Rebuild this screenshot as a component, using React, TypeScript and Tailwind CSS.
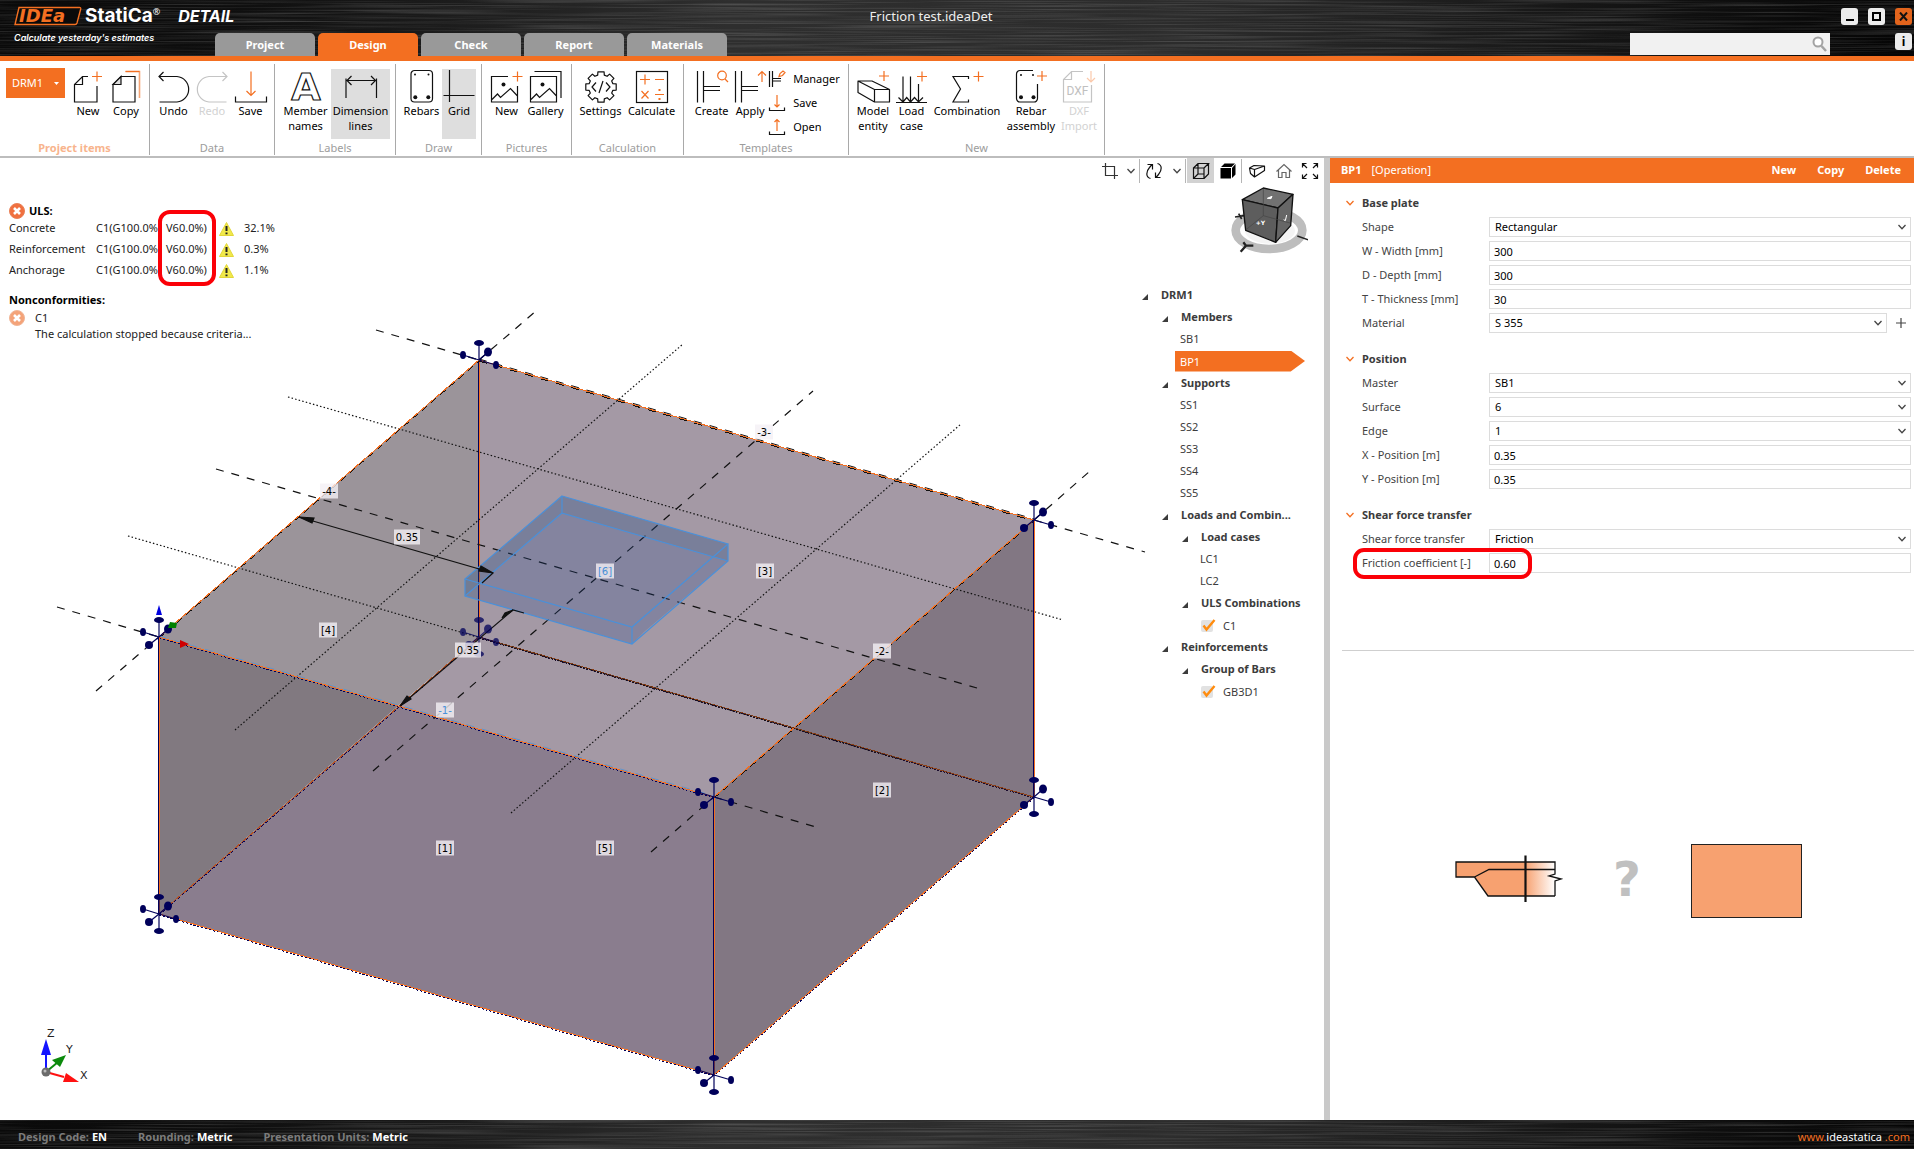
import React from "react";

const ORANGE = "#f36f21";
const NAVY = "#00005a";

/* ---------- shared pieces ---------- */

function Brushed({ id }: { id: string }) {
  return (
    <svg className="absolute inset-0 h-full w-full" aria-hidden="true">
      <defs>
        <linearGradient id={`${id}-g`} x1="0" x2="1" y1="0" y2="0">
          <stop offset="0" stopColor="#0a0a0a" />
          <stop offset="0.12" stopColor="#0e0e0e" />
          <stop offset="0.38" stopColor="#2e2e2e" />
          <stop offset="0.62" stopColor="#2c2c2c" />
          <stop offset="0.9" stopColor="#0e0e0e" />
          <stop offset="1" stopColor="#050505" />
        </linearGradient>
        <filter id={`${id}-n`} x="0" y="0" width="100%" height="100%">
          <feTurbulence type="fractalNoise" baseFrequency="0.006 0.7" numOctaves="2" seed="4" />
          <feColorMatrix values="0 0 0 0 0.4  0 0 0 0 0.4  0 0 0 0 0.4  1 0 0 0 -0.42" />
        </filter>
      </defs>
      <rect width="100%" height="100%" fill={`url(#${id}-g)`} />
      <rect width="100%" height="100%" filter={`url(#${id}-n)`} opacity="0.6" />
    </svg>
  );
}

function Icon({ children, size = 32, color = "#111" }: { children: React.ReactNode; size?: number; color?: string }) {
  return (
    <svg
      width={size}
      height={size}
      viewBox={`0 0 ${size} ${size}`}
      fill="none"
      stroke={color}
      strokeWidth="1.2"
      className="shrink-0 overflow-visible"
      aria-hidden="true"
    >
      {children}
    </svg>
  );
}

const Plus = ({ x, y, r = 5 }: { x: number; y: number; r?: number }) => (
  <path d={`M${x - r} ${y}h${2 * r}M${x} ${y - r}v${2 * r}`} stroke={ORANGE} />
);

const Chevron = ({ color = "#444" }: { color?: string }) => (
  <svg width="8" height="6" viewBox="0 0 8 6" fill="none" stroke={color} strokeWidth="1.3" aria-hidden="true">
    <path d="M0.5 1L4 4.7L7.5 1" />
  </svg>
);

/* ---------- ribbon icons ---------- */

function gearPath(cx: number, cy: number) {
  const pts: string[] = [];
  const teeth = 8;
  for (let i = 0; i < teeth; i++) {
    const c = (i / teeth) * Math.PI * 2 - Math.PI / 2;
    const steps: [number, number][] = [
      [-0.27, 12.3],
      [-0.2, 15.5],
      [0.2, 15.5],
      [0.27, 12.3],
    ];
    steps.forEach(([a, r]) =>
      pts.push(`${(cx + Math.cos(c + a) * r).toFixed(1)} ${(cy + Math.sin(c + a) * r).toFixed(1)}`)
    );
  }
  return `M${pts.join("L")}Z`;
}

const icons = {
  newDoc: (
    <Icon>
      <path d="M16 5.5H10.5L2.5 13.5V31H25V15M10.5 5.5V13.5H2.5" />
      <Plus x={25} y={5.5} />
    </Icon>
  ),
  copy: (
    <Icon>
      <path d="M11 5.5H25V31H3V13.5Z" />
      <path d="M11 5.5V13.5H3Z" fill="#ddd" />
      <path d="M15.5 0.5H29.5V27" stroke="#f5a576" strokeWidth="1.6" />
      <path d="M15.5 0.5H29.5" stroke={ORANGE} />
    </Icon>
  ),
  undo: (
    <Icon>
      <path d="M1 5.5H19A12.8 12.8 0 0 1 19 31H1.5M5.5 1L1 5.5L5.5 10" />
    </Icon>
  ),
  redo: (
    <Icon color="#c4c4c4">
      <path d="M31 5.5H13A12.8 12.8 0 0 0 13 31H30.5M26.5 1L31 5.5L26.5 10" />
    </Icon>
  ),
  save: (
    <Icon>
      <path d="M0.5 25.5V31H31.5V25.5" />
      <path d="M16 0.5V24.5M11.5 20L16 24.5L20.5 20" stroke={ORANGE} />
    </Icon>
  ),
  memberNames: (
    <Icon>
      <text x="16" y="29" textAnchor="middle" className="font-['DejaVu_Sans'] text-[38px] font-bold" strokeWidth="1.2">
        A
      </text>
    </Icon>
  ),
  dimension: (
    <Icon>
      <path d="M1 7.5V27M31.5 7.5V27M1.5 9.5H31M6.5 5L2 9.5L6.5 14M26 5L30.5 9.5L26 14" />
    </Icon>
  ),
  rebars: (
    <Icon>
      <rect x="5" y="-0.5" width="21.5" height="31.5" rx="3.5" />
      <g fill="#111" stroke="none">
        <circle cx="9" cy="3.5" r="1" />
        <circle cx="22.5" cy="3.5" r="1" />
        <circle cx="9.3" cy="26.3" r="2" />
        <circle cx="22.3" cy="26.3" r="2" />
      </g>
    </Icon>
  ),
  grid: (
    <Icon>
      <path d="M6.5 -1V31M0.5 24.5H31.5" />
    </Icon>
  ),
  picture: (
    <Icon>
      <path d="M17 5.5H0.5V31H26.5V15M1 28.5L6.5 23L9.5 26.5L19.5 17.5L26.5 25" />
      <circle cx="12.5" cy="13.5" r="2" fill="#111" stroke="none" />
      <Plus x={26.5} y={5.5} />
    </Icon>
  ),
  gallery: (
    <Icon>
      <path d="M0.5 5.5H26.5V31H0.5ZM1 28.5L6.5 23L9.5 26.5L19.5 17.5L26.5 25M4.5 0.5H31V27" />
      <circle cx="12.5" cy="13.5" r="2" fill="#111" stroke="none" />
    </Icon>
  ),
  settings: (
    <Icon>
      <path d={gearPath(16, 16)} strokeLinejoin="round" />
      <path d="M11 11.5L7 16L11 20.5M21 11.5L25 16L21 20.5M18 10L14 22" />
    </Icon>
  ),
  calculate: (
    <Icon>
      <rect x="0.5" y="0.5" width="31" height="31" />
      <g stroke={ORANGE}>
        <path d="M4 8.5H14M9 3.5V13.5M19 8.5H28M5.5 20L12.5 27.5M12.5 20L5.5 27.5M19 23.5H28" />
        <path d="M23.5 18V20M23.5 27V29" strokeWidth="2" />
      </g>
    </Icon>
  ),
  create: (
    <Icon>
      <path d="M1.5 0V31.5M7.5 0V31.5M7.5 15.5H24M7.5 19.5H24" />
      <circle cx="26" cy="4.5" r="4.3" stroke={ORANGE} />
      <path d="M29 8L32 11" stroke={ORANGE} />
    </Icon>
  ),
  apply: (
    <Icon>
      <path d="M1.5 0V31.5M7.5 0V31.5M7.5 15.5H24M7.5 19.5H24" />
      <path d="M28 0.5V11M24 4.5L28 0.5L32 4.5" stroke={ORANGE} />
    </Icon>
  ),
  modelEntity: (
    <Icon>
      <path d="M17.5 18.5H32.5V31H17.5ZM17.5 18.5L1 10H15L32.5 18.5M1 10V21.5L17.5 31" strokeLinejoin="round" />
      <Plus x={27} y={5} />
    </Icon>
  ),
  loadCase: (
    <Icon>
      <path d="M0 31.5H31M7 5.5V31M14.5 5.5V31M22.5 13V31M2.5 26.5L7 31L10.7 26.5L14.5 31L18.5 26.5L22.5 31L27 26.5" />
      <Plus x={26} y={5.5} />
    </Icon>
  ),
  combination: (
    <Icon>
      <path d="M17.5 8V5.5H2L9.5 18L2 31H17.5V28.5" />
      <Plus x={27.5} y={5.5} />
    </Icon>
  ),
  rebarAssembly: (
    <Icon>
      <path d="M18 -0.5H5A3.5 3.5 0 0 0 1.5 3V27.5A3.5 3.5 0 0 0 5 31H19A3.5 3.5 0 0 0 22.5 27.5V13" />
      <g fill="#111" stroke="none">
        <circle cx="6" cy="4" r="1" />
        <circle cx="18" cy="4" r="1" />
        <circle cx="6" cy="26.3" r="2" />
        <circle cx="18.5" cy="26.3" r="2" />
      </g>
      <Plus x={27} y={5} />
    </Icon>
  ),
  dxf: (
    <Icon color="#c4c4c4">
      <path d="M20 0.5H8.5L0.5 8.5V31H28.5V14M8.5 0.5V8.5H0.5" />
      <path d="M28 0V11M24 7L28 11L32 7" stroke="#fbc9ab" />
      <text x="14.5" y="24" textAnchor="middle" fill="#c0c0c0" stroke="none" className="font-['Roboto'] text-[12px]">
        DXF
      </text>
    </Icon>
  ),
  manager: (
    <Icon size={16}>
      <path d="M0.5 0V16M3.5 0V16M3.5 7.5H12M3.5 10H12" />
      <path d="M10 5.5L11 2.5L14 0L16 1.5L13.5 4.5Z" stroke={ORANGE} />
    </Icon>
  ),
  saveSmall: (
    <Icon size={16}>
      <path d="M0.5 12.5V15.5H15.5V12.5" />
      <path d="M8 0V12M5.5 9.5L8 12L10.5 9.5" stroke={ORANGE} />
    </Icon>
  ),
  openSmall: (
    <Icon size={16}>
      <path d="M0.5 12.5V15.5H15.5V12.5" />
      <path d="M8 12V0.5M5.5 3L8 0.5L10.5 3" stroke={ORANGE} />
    </Icon>
  ),
};

/* ---------- ribbon ---------- */

function Tool({
  icon,
  label,
  width,
  active,
  disabled,
}: {
  icon: React.ReactNode;
  label: string;
  width: string;
  active?: boolean;
  disabled?: boolean;
}) {
  return (
    <button
      disabled={disabled}
      className={`flex h-[70px] shrink-0 flex-col items-center pt-[2px] text-[11px] leading-[15px] ${width} ${
        active ? "bg-[#dedede]" : ""
      } ${disabled ? "text-[#d2d2d2]" : "text-black"}`}
    >
      {icon}
      <span className="whitespace-pre text-center">{label}</span>
    </button>
  );
}

function Group({
  title,
  width,
  accent,
  children,
}: {
  title: string;
  width: string;
  accent?: boolean;
  children: React.ReactNode;
}) {
  return (
    <section className={`flex shrink-0 flex-col justify-between border-r border-[#a9a9a9] pt-[5px] ${width}`}>
      <div className="flex justify-center">{children}</div>
      <h2
        className={`text-center text-[11px] leading-[15px] ${
          accent ? "font-bold text-[#f8b48d]" : "text-[#9c9c9c]"
        }`}
      >
        {title}
      </h2>
    </section>
  );
}

function Ribbon() {
  return (
    <div className="flex h-[97px] shrink-0 border-b-2 border-[#bdbdbd] pb-px pt-[3px]">
      <Group title="Project items" width="w-[150px]" accent>
        <div className="flex gap-1 pl-[2px]">
          <button className="-mt-[1px] flex h-[30px] w-[59px] items-center justify-between bg-[#f36f21] px-[6px] text-[11px] text-white">
            DRM1
            <svg width="5" height="3" viewBox="0 0 5 3" fill="white" aria-hidden="true">
              <path d="M0 0H5L2.5 3Z" />
            </svg>
          </button>
          <div className="flex">
            <Tool icon={icons.newDoc} label="New" width="w-[38px]" />
            <Tool icon={icons.copy} label="Copy" width="w-[38px]" />
          </div>
        </div>
      </Group>
      <Group title="Data" width="w-[125px]">
        <Tool icon={icons.undo} label="Undo" width="w-[38px]" />
        <Tool icon={icons.redo} label="Redo" width="w-[39px]" disabled />
        <Tool icon={icons.save} label="Save" width="w-[38px]" />
      </Group>
      <Group title="Labels" width="w-[121px]">
        <Tool icon={icons.memberNames} label={"Member\nnames"} width="w-[51px]" />
        <Tool icon={icons.dimension} label={"Dimension\nlines"} width="w-[59px]" active />
      </Group>
      <Group title="Draw" width="w-[86px]">
        <Tool icon={icons.rebars} label="Rebars" width="w-[41px]" />
        <Tool icon={icons.grid} label="Grid" width="w-[34px]" active />
      </Group>
      <Group title="Pictures" width="w-[90px]">
        <Tool icon={icons.picture} label="New" width="w-[38px]" />
        <Tool icon={icons.gallery} label="Gallery" width="w-[40px]" />
      </Group>
      <Group title="Calculation" width="w-[112px]">
        <Tool icon={icons.settings} label="Settings" width="w-[48px]" />
        <Tool icon={icons.calculate} label="Calculate" width="w-[54px]" />
      </Group>
      <Group title="Templates" width="w-[165px]">
        <Tool icon={icons.create} label="Create" width="w-[39px]" />
        <Tool icon={icons.apply} label="Apply" width="w-[38px]" />
        <div className="flex flex-col gap-2 pt-[2px] text-[11px] leading-4">
          <button className="flex items-center gap-2">{icons.manager}Manager</button>
          <button className="flex items-center gap-2">{icons.saveSmall}Save</button>
          <button className="flex items-center gap-2">{icons.openSmall}Open</button>
        </div>
      </Group>
      <Group title="New" width="w-[256px]">
        <Tool icon={icons.modelEntity} label={"Model\nentity"} width="w-[38px]" />
        <Tool icon={icons.loadCase} label={"Load\ncase"} width="w-[39px]" />
        <Tool icon={icons.combination} label="Combination" width="w-[72px]" />
        <Tool icon={icons.rebarAssembly} label={"Rebar\nassembly"} width="w-[56px]" />
        <Tool icon={icons.dxf} label={"DXF\nImport"} width="w-[40px]" disabled />
      </Group>
    </div>
  );
}

/* ---------- header ---------- */

function Logo() {
  return (
    <div className="flex w-[250px] flex-col pl-[14px] pt-[6px] text-white">
      <div className="flex items-center whitespace-nowrap">
        <svg width="68" height="20" viewBox="0 0 68 20" role="img" aria-label="IDEA">
          <path d="M5 1.5H65.5Q67 1.5 66.7 3L63 17Q62.5 18.5 61 18.5H1Z" fill="#0a0a0a" stroke={ORANGE} strokeWidth="1.4" />
          <text x="5" y="16" fill={ORANGE} className="font-['DejaVu_Sans'] text-[18px] font-bold italic">
            IDEa
          </text>
        </svg>
        <span className="pl-[3px] font-['Inter'] text-[19px] font-bold leading-5">StatiCa</span>
        <sup className="text-[9px]">®</sup>
        <span className="pl-[18px] font-['Inter'] text-[16px] font-bold italic leading-5">DETAIL</span>
      </div>
      <span className="pt-[4px] font-['Inter'] text-[9px] font-semibold italic leading-4">Calculate yesterday's estimates</span>
    </div>
  );
}

const tabs = ["Project", "Design", "Check", "Report", "Materials"];

function Header() {
  return (
    <header className="relative h-[61px] shrink-0 border-b-[5px] border-[#f36f21] bg-black">
      <Brushed id="head" />
      <div className="relative flex h-full">
        <Logo />
        <nav className="flex min-w-0 flex-1 flex-col justify-between">
          <h1 className="pt-[8px] text-center text-[13px] leading-4 text-[#eee]">Friction test.ideaDet</h1>
          <div className="-ml-[35px] flex gap-[3px]">
            {tabs.map((t) => (
              <button
                key={t}
                className={`h-[23px] w-[100px] rounded-t-[5px] pt-px text-[11px] font-bold text-white ${
                  t === "Design" ? "bg-[#f36f21]" : "bg-[#999]"
                }`}
              >
                {t}
              </button>
            ))}
          </div>
        </nav>
        <div className="flex w-[302px] flex-col items-end pr-[2px] pt-[8px]">
          <div className="flex gap-[10px]">
            <button aria-label="Minimize" className="flex h-[17px] w-[17px] items-end justify-center rounded-[3px] bg-[#ececec] pb-[4px]">
              <span className="h-[2px] w-[8px] bg-black" />
            </button>
            <button aria-label="Maximize" className="flex h-[17px] w-[17px] items-center justify-center rounded-[3px] bg-[#ececec]">
              <span className="h-[9px] w-[9px] border-2 border-black" />
            </button>
            <button aria-label="Close" className="flex h-[17px] w-[17px] items-center justify-center rounded-[3px] bg-[#e2641c]">
              <svg width="9" height="9" viewBox="0 0 9 9" stroke="#111" strokeWidth="2" aria-hidden="true">
                <path d="M1 0.5L8 8.5M8 0.5L1 8.5" />
              </svg>
            </button>
          </div>
          <div className="flex gap-[65px] pt-[8px]">
            <label className="flex h-[22px] w-[200px] items-center bg-[#f1f1f1] pr-[3px]">
              <input aria-label="Search" className="min-w-0 flex-1 bg-transparent px-1 text-[11px] outline-none" />
              <svg width="15" height="16" viewBox="0 0 15 16" fill="none" stroke="#a3a3a3" aria-hidden="true">
                <circle cx="6" cy="6" r="4.5" strokeWidth="2" fill="#fff" />
                <path d="M9.5 10L14 15" strokeWidth="2.5" />
              </svg>
            </label>
            <button aria-label="Information" className="h-[17px] w-[17px] rounded-[3px] bg-[#ececec] text-[12px] font-bold leading-[17px] text-black">
              i
            </button>
          </div>
        </div>
      </div>
    </header>
  );
}

/* ---------- 3D scene ---------- */

const dirs: [number, number, number, number][] = [
  [0, -17, 5, 3],
  [0, 17, 5, 3],
  [-16, -5, 3, 4],
  [17, 5, 3, 4],
  [9, -8, 4, 4.5],
  [-10, 8, 4, 4],
];

function Support({ x, y, opacity = 1, skip = [] }: { x: number; y: number; opacity?: number; skip?: number[] }) {
  return (
    <g opacity={opacity}>
      {dirs.map(([dx, dy, rx, ry], i) =>
        skip.includes(i) ? null : (
          <g key={i}>
            <path d={`M${x} ${y}l${dx} ${dy}`} stroke={NAVY} strokeWidth="1.2" />
            <ellipse cx={x + dx} cy={y + dy} rx={rx} ry={ry} fill={NAVY} />
          </g>
        )
      )}
    </g>
  );
}

function Tag({ x, y, text, color = "#000" }: { x: number; y: number; text: string; color?: string }) {
  const w = text.length > 3 ? 26 : 18;
  return (
    <g>
      <rect x={x - w / 2} y={y - 7.5} width={w} height="15" fill="#f4f0f5" fillOpacity="0.8" />
      <text x={x} y={y + 4} textAnchor="middle" fill={color} className="font-['DejaVu_Sans'] text-[10px]">
        {text}
      </text>
    </g>
  );
}

function Edge({
  d,
  base = ORANGE,
  over = NAVY,
  dash = "2 2",
}: {
  d: string;
  base?: string;
  over?: string;
  dash?: string;
}) {
  return (
    <g shapeRendering="crispEdges">
      <path d={d} stroke={over} strokeWidth="1" strokeDasharray={dash} transform="translate(0 1)" />
      <path d={d} stroke={base} strokeWidth="1" />
    </g>
  );
}

function Post({ x, y1, y2 }: { x: number; y1: number; y2: number }) {
  return (
    <>
      <path d={`M${x - 0.5} ${y1}V${y2}`} stroke={NAVY} strokeWidth="1" />
      <path d={`M${x + 0.5} ${y1}V${y2}`} stroke={ORANGE} strokeWidth="1" />
    </>
  );
}

function Scene() {
  return (
    <svg
      className="absolute inset-0 h-full w-full"
      viewBox="0 158 1324 962"
      preserveAspectRatio="xMinYMin meet"
      fill="none"
      role="img"
      aria-label="3D model of concrete block with base plate"
    >
      <path d="M159 637L479 360V637L398 706Z" fill="#9b949a" />
      <path d="M479 360L1034 520L714 797L398 706L479 637Z" fill="#a499a5" />
      <path d="M159 637L398 706L159 914Z" fill="#817980" />
      <path d="M398 706L714 797V1075L159 914Z" fill="#8a7d8e" />
      <path d="M714 797L1034 520V797L714 1075Z" fill="#827783" />

      {/* rear edges seen through the block */}
      <Post x={479} y1={360} y2={637} />
      <Edge d="M479 637L1034 797" base="#8a3f17" over="#1a0b2e" dash="2 1" />
      <Edge d="M479 637L159 914" base="#b35326" over={NAVY} dash="3 2" />

      {/* dotted grid */}
      <g stroke="#111" strokeWidth="1.2" strokeDasharray="1.5 2.2">
        <path d="M288 397L1063 620" />
        <path d="M128 536L903 760" />
        <path d="M235 730L683 344" />
        <path d="M511 813L961 424" />
      </g>

      {/* dashed axes */}
      <g stroke="#111" strokeWidth="1.2" strokeDasharray="8 8">
        <path d="M376 330L479 360M1034 520L1145 552" />
        <path d="M96 691L159 637M479 360L536 311" />
        <path d="M57 607L159 637M714 797L816 827" />
        <path d="M651 852L714 797M1034 520L1090 471" />
        <path d="M216 469L977 688" />
        <path d="M373 771L813 391" />
      </g>

      <path d="M479 359L1034 519" stroke="#111" strokeDasharray="8 8" />
      <Edge d="M479 360L1034 520" over="#111" dash="8 8" />
      <Edge d="M159 637L479 360" over="#111" dash="7 5" />
      <Edge d="M714 797L1034 520" over="#111" dash="7 5" />
      <Edge d="M159 637L714 797" over={NAVY} dash="2 2" />
      <path d="M159 636L714 796" stroke="#5c94cf" strokeDasharray="8 8" />
      <Edge d="M159 914L714 1075L1034 797" />
      <Post x={159} y1={637} y2={914} />
      <Post x={714} y1={797} y2={1075} />
      <Post x={1034} y1={520} y2={797} />

      {/* base plate */}
      <path d="M562 496L728 544V561L644 632L632 644L465 596V579Z" fill="#244991" fillOpacity="0.25" />
      <path d="M562 496L728 544V561L562 513L465 596V579Z" fill="#2d5a78" fillOpacity="0.12" />
      <g stroke="#4a90d9" strokeWidth="1.2">
        <path d="M562 496L728 544L632 627L465 579ZM465 579V596L632 644L728 561V544M632 627V644" />
        <path d="M562 496V513L728 561M562 513L465 596" />
      </g>

      {/* dimensions */}
      <g stroke="#111" strokeWidth="1.2" fill="#111">
        <path d="M299 517L493 573L482 583M400 706L513 610L524 613" fill="none" />
        <path d="M299 517L314 518L312 523ZM493 573L481 566L479 571ZM400 706L407 696L411 699ZM513 610L505 613L502 618Z" />
      </g>

      <Support x={479} y={360} skip={[1, 5]} />
      <Support x={159} y={637} skip={[1, 3]} />
      <Support x={1034} y={520} skip={[1, 2]} />
      <Support x={714} y={797} skip={[1, 4]} />
      <Support x={479} y={637} opacity={0.75} />
      <Support x={159} y={914} />
      <Support x={1034} y={797} skip={[2]} />
      <Support x={714} y={1075} skip={[4]} />

      {/* local axes at block origin */}
      <path d="M159 605L162 615H156Z" fill="#0000e0" />
      <path d="M168 628L170 622L177 623L176 628Z" fill="#008000" />
      <path d="M180 640L189 644L180 648Z" fill="#d00000" />

      <Tag x={329} y={491} text="-4-" />
      <Tag x={764} y={432} text="-3-" />
      <Tag x={882} y={651} text="-2-" />
      <Tag x={445} y={710} text="-1-" color="#4a90d9" />
      <Tag x={328} y={630} text="[4]" />
      <Tag x={445} y={848} text="[1]" />
      <Tag x={605} y={848} text="[5]" />
      <Tag x={882} y={790} text="[2]" />
      <Tag x={765} y={571} text="[3]" />
      <Tag x={605} y={571} text="[6]" color="#4a90d9" />
      <Tag x={407} y={537} text="0.35" />
      <Tag x={468} y={650} text="0.35" />

      {/* global axis triad */}
      <g strokeWidth="2">
        <path d="M46 1072V1050" stroke="#1414ff" />
        <path d="M46 1039L51 1055H41Z" fill="#1414ff" />
        <path d="M46 1072L58 1062" stroke="#0b8a0b" />
        <path d="M66 1055L60 1067L52 1060Z" fill="#0b8a0b" />
        <path d="M46 1072L64 1077" stroke="#f11" />
        <path d="M79 1082L63 1082L66 1073Z" fill="#f11" />
      </g>
      <circle cx="46" cy="1072" r="4.5" fill="#6b6b6b" />
      <circle cx="45" cy="1071" r="1.5" fill="#bbb" />
      <g fill="#222" className="font-['DejaVu_Sans'] text-[11px]">
        <text x="47" y="1037">Z</text>
        <text x="66" y="1053">Y</text>
        <text x="80" y="1079">X</text>
      </g>
    </svg>
  );
}

/* ---------- status report ---------- */

function ErrorMark({ soft }: { soft?: boolean }) {
  return (
    <svg width="16" height="16" viewBox="0 0 16 16" aria-hidden="true">
      <circle cx="8" cy="8" r="7.5" fill={soft ? "#f4a379" : "#f0703f"} stroke={soft ? "#f0b596" : "#e98058"} />
      <path d="M5 5L11 11M11 5L5 11" stroke="white" strokeWidth="2.6" />
    </svg>
  );
}

const Warning = () => (
  <svg width="15" height="14" viewBox="0 0 15 14" aria-hidden="true">
    <path d="M7.5 0.5L14.5 13.5H0.5Z" fill="#f1e94a" stroke="#e2d63a" />
    <path d="M7.5 4V9M7.5 10.5V12.3" stroke="#222" strokeWidth="2" />
  </svg>
);

const checks = [
  ["Concrete", "32.1%"],
  ["Reinforcement", "0.3%"],
  ["Anchorage", "1.1%"],
];

function Report() {
  return (
    <div className="relative w-[300px] pl-[9px] pt-[45px] text-[11px] text-[#222]">
      <h3 className="flex h-[15px] items-center gap-1 font-bold leading-4 text-black">
        <ErrorMark />
        ULS:
      </h3>
      <div className="relative">
        <table className="table-fixed border-collapse">
          <tbody>
            {checks.map(([name, value]) => (
              <tr key={name} className="h-[21px]">
                <td className="w-[87px] p-0">{name}</td>
                <td className="w-[62px] p-0">
                  <div className="w-[62px] overflow-hidden whitespace-nowrap">C1(G100.0%</div>
                </td>
                <td className="w-[61px] p-0 pl-2">V60.0%)</td>
                <td className="w-[25px] p-0">
                  <Warning />
                </td>
                <td className="p-0">{value}</td>
              </tr>
            ))}
          </tbody>
        </table>
        <div className="pointer-events-none absolute -top-2 left-[149px] h-[76px] w-[58px] rounded-[12px] border-4 border-[#fb0007]" />
      </div>
      <h3 className="pt-[11px] font-bold leading-4 text-black">Nonconformities:</h3>
      <div className="flex items-center gap-[10px] pt-[2px] leading-4">
        <ErrorMark soft />
        C1
      </div>
      <p className="pl-[26px] leading-4">The calculation stopped because criteria...</p>
    </div>
  );
}

/* ---------- view tools ---------- */

const Sep = () => <span className="h-6 w-px bg-[#b5b5b5]" />;

function ViewTools() {
  const b = "flex h-full items-center justify-center";
  return (
    <div className="flex h-[25px] items-center">
      <button aria-label="Crop view" className={`${b} w-[24px]`}>
        <Icon size={16}>
          <path d="M3.5 0V12.5H16M0 3.5H12.5V16" stroke="#333" />
        </Icon>
      </button>
      <button aria-label="Crop options" className={`${b} w-[17px]`}><Chevron /></button>
      <Sep />
      <button aria-label="Rotate view" className={`${b} w-[28px]`}>
        <Icon size={16}>
          <path d="M4.5 15.5C-0.5 14 0 8.500 3.500 4.500L6 1.500M1.500 1.500H6.500V6.500M11.500 0.500C16.500 2 16 7.500 12.500 11.500L10 14.500M14.500 14.500H9.500V9.500" />
        </Icon>
      </button>
      <button aria-label="Rotate options" className={`${b} w-[17px]`}><Chevron /></button>
      <Sep />
      <button aria-label="Wireframe" className={`${b} ml-px w-[27px] bg-[#d2d2d2]`}>
        <Icon size={16}>
          <path d="M0.5 5H11V15.5H0.5ZM0.5 5L5 0.5H15.5L11 5M15.5 0.5V11L11 15.5M5 0.5V11H11M5 11L0.5 15.5" />
        </Icon>
      </button>
      <button aria-label="Solid" className={`${b} w-[27px]`}>
        <Icon size={16}>
          <path d="M0.5 5H11V15.5H0.5ZM12 5L15.5 1V11.5L12 15ZM1 4L4.5 0.5H15L11.5 4Z" fill="#000" stroke="none" />
        </Icon>
      </button>
      <Sep />
      <button aria-label="Perspective" className={`${b} w-[30px]`}>
        <Icon size={16}>
          <path d="M0.5 5L5.5 6.5V14L1.5 10.5ZM0.5 5L5 2.5L15.5 3L5.5 6.5M15.5 3V7.5L5.5 14" strokeLinejoin="round" />
        </Icon>
      </button>
      <button aria-label="Home view" className={`${b} w-[24px]`}>
        <Icon size={16}>
          <path d="M0.5 8.5L8 1.5L15.5 8.5M2.5 7V14.5H6V9.5H10V14.5H13.5V7" stroke="#666" />
        </Icon>
      </button>
      <button aria-label="Zoom to fit" className={`${b} w-[28px]`}>
        <Icon size={16}>
          <path d="M0.5 4.500V0.500H4.500M0.500 0.500L5 5M11.500 0.500H15.500V4.500M15.500 0.500L11 5M0.500 11.500V15.500H4.500M0.500 15.500L5 11M15.500 11.500V15.500H11.500M15.500 15.500L11 11" />
        </Icon>
      </button>
    </div>
  );
}

function ViewCube() {
  return (
    <svg width="80" height="69" viewBox="414 93 240 207" fill="none" role="img" aria-label="View cube">
      <ellipse cx="537" cy="226" rx="100" ry="56" stroke="#bdbdbd" strokeWidth="26" />
      <ellipse cx="540" cy="228" rx="75" ry="38" fill="#f4f4f4" />
      <path d="M435 186L462 182M446 176L455 192" stroke="#222" strokeWidth="5" />
      <path d="M452 290L468 272L490 272M468 272L460 262" stroke="#222" strokeWidth="7" />
      <path d="M622 243L656 255" stroke="#222" strokeWidth="4" />
      <g stroke="#111" strokeWidth="4" strokeLinejoin="round">
        <path d="M457 134L520 99L609 118L564 159Z" fill="#717171" />
        <path d="M457 134L564 159L557 262L467 226Z" fill="#5d5d5d" />
        <path d="M564 159L609 118L602 212L557 262Z" fill="#666" />
      </g>
      <path d="M520 101V182L468 224M520 182L600 204" stroke="#444" strokeWidth="2" />
      <g fill="white" className="font-['DejaVu_Sans'] text-[18px] font-bold">
        <text x="497" y="211">+Y</text>
        <path d="M532 130L546 124L543 131Z" stroke="white" strokeWidth="3" />
        <path d="M590 180L586 197L581 194" stroke="white" strokeWidth="3" fill="none" />
      </g>
    </svg>
  );
}

/* ---------- model tree ---------- */

type Node = { label: string; level: number; kind: "branch" | "leaf" | "check"; selected?: boolean };

const nodes: Node[] = [
  { label: "DRM1", level: 0, kind: "branch" },
  { label: "Members", level: 1, kind: "branch" },
  { label: "SB1", level: 1, kind: "leaf" },
  { label: "BP1", level: 1, kind: "leaf", selected: true },
  { label: "Supports", level: 1, kind: "branch" },
  { label: "SS1", level: 1, kind: "leaf" },
  { label: "SS2", level: 1, kind: "leaf" },
  { label: "SS3", level: 1, kind: "leaf" },
  { label: "SS4", level: 1, kind: "leaf" },
  { label: "SS5", level: 1, kind: "leaf" },
  { label: "Loads and Combin...", level: 1, kind: "branch" },
  { label: "Load cases", level: 2, kind: "branch" },
  { label: "LC1", level: 2, kind: "leaf" },
  { label: "LC2", level: 2, kind: "leaf" },
  { label: "ULS Combinations", level: 2, kind: "branch" },
  { label: "C1", level: 2, kind: "check" },
  { label: "Reinforcements", level: 1, kind: "branch" },
  { label: "Group of Bars", level: 2, kind: "branch" },
  { label: "GB3D1", level: 2, kind: "check" },
];

const indent = ["pl-[2px]", "pl-[22px]", "pl-[42px]"];

function Tree() {
  return (
    <ul className="w-[184px] text-[11px] leading-[22px] text-[#3c3c3c]">
      {nodes.map((n) => (
        <li key={n.label} className={`flex h-[22px] items-center whitespace-nowrap ${indent[n.level]}`}>
          {n.kind === "branch" && (
            <button className="flex items-center gap-[13px] font-bold">
              <svg width="6" height="6" viewBox="0 0 6 6" className="mt-[3px]" fill="#3c3c3c" aria-hidden="true">
                <path d="M6 0V6H0Z" />
              </svg>
              {n.label}
            </button>
          )}
          {n.kind === "leaf" &&
            (n.selected ? (
              <button className="ml-[13px] h-[21px] w-[130px] bg-[#f36f21] pl-[5px] text-left leading-[21px] text-white [clip-path:polygon(0_0,89%_0,100%_50%,89%_100%,0_100%)]">
                {n.label}
              </button>
            ) : (
              <button className="pl-[18px]">{n.label}</button>
            ))}
          {n.kind === "check" && (
            <label className="relative flex items-center gap-[10px] pl-[19px] pt-px">
              <input type="checkbox" defaultChecked className="h-[12px] w-[12px] appearance-none rounded-[2px] bg-[#e2e2e2]" />
              <svg width="14" height="13" viewBox="0 0 14 13" className="pointer-events-none absolute left-[20px] top-[5px]" fill="none" stroke="#ff8c0f" strokeWidth="2.4" aria-hidden="true">
                <path d="M1.5 6.5L4.5 10.5L12.5 1" />
              </svg>
              {n.label}
            </label>
          )}
        </li>
      ))}
    </ul>
  );
}

/* ---------- property panel ---------- */

type Field = { label: string; value: string; select?: boolean; add?: boolean; marked?: boolean };

const sections: { title: string; fields: Field[] }[] = [
  {
    title: "Base plate",
    fields: [
      { label: "Shape", value: "Rectangular", select: true },
      { label: "W - Width [mm]", value: "300" },
      { label: "D - Depth [mm]", value: "300" },
      { label: "T - Thickness [mm]", value: "30" },
      { label: "Material", value: "S 355", select: true, add: true },
    ],
  },
  {
    title: "Position",
    fields: [
      { label: "Master", value: "SB1", select: true },
      { label: "Surface", value: "6", select: true },
      { label: "Edge", value: "1", select: true },
      { label: "X - Position [m]", value: "0.35" },
      { label: "Y - Position [m]", value: "0.35" },
    ],
  },
  {
    title: "Shear force transfer",
    fields: [
      { label: "Shear force transfer", value: "Friction", select: true },
      { label: "Friction coefficient [-]", value: "0.60", marked: true },
    ],
  },
];

function FieldRow({ field }: { field: Field }) {
  const id = React.useId();
  return (
    <div className="relative flex h-5 items-center">
      <label htmlFor={id} className="w-[127px] shrink-0 text-[#444]">
        {field.label}
      </label>
      {field.select ? (
        <div className="relative min-w-0 flex-1">
          <select id={id} className="block h-5 w-full appearance-none border border-[#dcdcdc] bg-white pl-[5px] text-black">
            <option>{field.value}</option>
          </select>
          <span className="pointer-events-none absolute right-[5px] top-[7px]">
            <Chevron />
          </span>
        </div>
      ) : (
        <input id={id} defaultValue={field.value} className="h-5 min-w-0 flex-1 border border-[#dcdcdc] bg-white pl-1 text-black outline-none" />
      )}
      {field.add && (
        <button aria-label="Add material" className="ml-[9px] mr-[5px]">
          <svg width="10" height="10" viewBox="0 0 10 10" stroke="#444" strokeWidth="1.2" aria-hidden="true">
            <path d="M5 0V10M0 5H10" />
          </svg>
        </button>
      )}
      {field.marked && (
        <div className="pointer-events-none absolute -left-[9px] -top-[5px] h-[31px] w-[179px] rounded-[11px] border-4 border-[#fb0007]" />
      )}
    </div>
  );
}

function Properties() {
  return (
    <aside className="flex w-[584px] shrink-0 flex-col text-[11px]">
      <div className="flex h-[25px] items-center bg-[#f36f21] pl-[11px] pr-[13px] text-white">
        <strong>BP1</strong>
        <span className="flex-1 pl-[10px]">[Operation]</span>
        <div className="flex gap-[21px] font-bold">
          <button>New</button>
          <button>Copy</button>
          <button>Delete</button>
        </div>
      </div>
      <div className="flex flex-col gap-4 pl-[16px] pr-[3px] pt-[10px]">
        {sections.map((s) => (
          <section key={s.title} className="flex flex-col gap-1">
            <button className="flex h-5 items-center gap-2 text-left font-bold text-[#3c3c3c]">
              <Chevron color={ORANGE} />
              {s.title}
            </button>
            <div className="flex flex-col gap-1 pl-[16px]">
              {s.fields.map((f) => (
                <FieldRow key={f.label} field={f} />
              ))}
            </div>
          </section>
        ))}
      </div>
      <hr className="ml-[12px] mt-[77px] border-[#cfcfcf]" />
      <div className="flex items-center gap-[49px] pl-[125px] pt-[189px]">
        <svg width="108" height="48" viewBox="0 0 108 48" fill="none" stroke="#111" strokeWidth="1.3" aria-hidden="true">
          <defs>
            <linearGradient id="fade" x1="0" x2="1">
              <stop offset="0" stopColor="#f7a170" />
              <stop offset="1" stopColor="#fff" />
            </linearGradient>
          </defs>
          <path d="M1 7H70V41H33L20 22H1Z" fill="#f7a170" stroke="none" />
          <path d="M70 7H100V41H70Z" fill="url(#fade)" stroke="none" />
          <path d="M100 41H33L19.5 22H1V7H100V19L94 21L106 24L100 26V41M19.5 22L34 14.5H100" />
          <path d="M70.5 0.5V47" strokeWidth="2.2" />
        </svg>
        <span className="w-[30px] text-center font-['DejaVu_Sans'] text-[48px] font-bold leading-[48px] text-[#c0c0c0]">?</span>
        <div className="mt-1 h-[74px] w-[111px] border border-[#222] bg-[#f7a170]" />
      </div>
    </aside>
  );
}

/* ---------- footer ---------- */

const settings = [
  ["Design Code:", "EN"],
  ["Rounding:", "Metric"],
  ["Presentation Units:", "Metric"],
];

function Footer() {
  return (
    <footer className="relative h-[29px] shrink-0 bg-black">
      <Brushed id="foot" />
      <div className="relative flex h-full items-center pl-[18px] pr-[4px] pt-[6px] text-[11px] text-white">
        <dl className="flex flex-1 gap-[31px] font-bold">
          {settings.map(([k, v]) => (
            <div key={k} className="flex gap-[3px]">
              <dt className="text-[#7c7c7c]">{k}</dt>
              <dd>{v}</dd>
            </div>
          ))}
        </dl>
        <a href="#ideastatica">
          <span className="text-[#f36f21]">www.</span>ideastatica <span className="text-[#f36f21]">.com</span>
        </a>
      </div>
    </footer>
  );
}

export default function App() {
  return (
    <div className="flex h-screen flex-col overflow-hidden bg-white font-['Noto_Sans','Open_Sans',sans-serif]">
      <Header />
      <Ribbon />
      <div className="flex min-h-0 flex-1">
        <main className="relative flex min-w-0 flex-1 items-start justify-between">
          <Scene />
          <Report />
          <div className="relative flex flex-col items-end">
            <ViewTools />
            <div className="pr-[16px] pt-[3px]">
              <ViewCube />
            </div>
            <div className="pt-[29px]">
              <Tree />
            </div>
          </div>
        </main>
        <div className="w-[6px] shrink-0 bg-[#c9c9c9]" />
        <Properties />
      </div>
      <Footer />
    </div>
  );
}
